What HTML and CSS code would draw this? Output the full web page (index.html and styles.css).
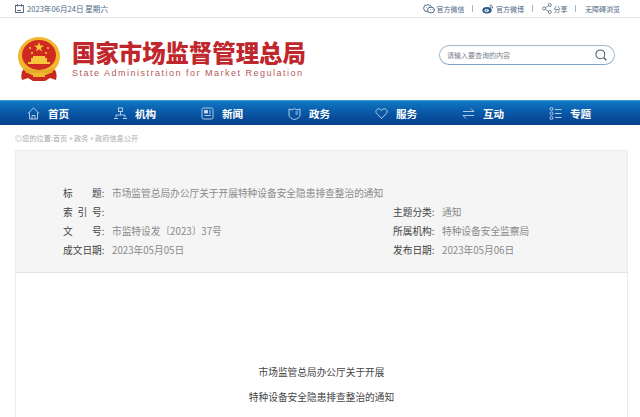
FILE: index.html
```html
<!DOCTYPE html>
<html lang="zh-CN">

<head>
    <meta charset="UTF-8">
    <meta name="viewport" content="width=device-width, initial-scale=1.0">
    <title>国家市场监督管理总局</title>
    <link rel="stylesheet" href="styles.css">
</head>

<body>
    <!-- Top bar -->
    <div class="topbar">
        <div class="date">
            <svg width="9" height="9" viewBox="0 0 9 9" fill="none" stroke="#4a5f78" stroke-width="0.9">
                <rect x="0.5" y="1.5" width="8" height="7"/>
                <path d="M2.500 0v2.500M6.500 0v2.500M2 6.500h4"/>
            </svg>
            <span>2023年06月24日 星期六</span>
        </div>
        <div class="toplinks">
            <a class="toplink">
                <svg width="12" height="10" viewBox="0 0 12 10" fill="none" stroke="#3f5a78" stroke-width="0.9">
                    <ellipse cx="4.600" cy="4.200" rx="4" ry="3.500"/>
                    <ellipse cx="8" cy="6" rx="3.400" ry="2.900" fill="#fff"/>
                    <path d="M3 3.400h.6M6 3.400h.6M7 5.500h.5M9 5.500h.5"/>
                </svg>
                官方微信
            </a>
            <i class="sep"></i>
            <a class="toplink">
                <svg width="12" height="10" viewBox="0 0 12 10" fill="none">
                    <ellipse cx="5" cy="6.300" rx="4.600" ry="3.300" fill="#2f5d8c"/>
                    <ellipse cx="4.700" cy="6.500" rx="2.200" ry="1.600" fill="#fff"/>
                    <circle cx="4.500" cy="6.600" r="0.800" fill="#2f5d8c"/>
                    <path d="M7.500 1.200c2-.5 3.600 1.200 3 3.200M7.800 2.800c1-.2 1.400.4 1.200 1.300" stroke="#2f5d8c" stroke-width="0.8"/>
                </svg>
                官方微博
            </a>
            <i class="sep"></i>
            <a class="toplink">
                <svg width="10" height="11" viewBox="0 0 10 11" fill="none" stroke="#566a80" stroke-width="0.8">
                    <circle cx="2" cy="5.500" r="1.500"/>
                    <circle cx="7.800" cy="2" r="1.500"/>
                    <circle cx="7.800" cy="9" r="1.500"/>
                    <path d="M3.300 4.700l3.200-2M3.300 6.300l3.200 2"/>
                </svg>
                分享
            </a>
            <i class="sep"></i>
            <a class="toplink">无障碍浏览</a>
        </div>
    </div>

    <!-- Logo and search -->
    <div class="header">
        <svg class="emblem" width="42" height="45" viewBox="0 0 42 45">
            <path d="M6 32c-3 2-3 8-2 11l6-2 5 3h12l5-3 6 2c1-3 1-9-2-11z" fill="#c8281e"/>
            <ellipse cx="21" cy="19.500" rx="21" ry="19.500" fill="#f0b72f"/>
            <ellipse cx="21" cy="18" rx="17" ry="15" fill="#cf2a1f"/>
            <path d="M21 5l1.200 3.600h3.800l-3.100 2.300 1.200 3.600-3.100-2.300-3.100 2.300 1.200-3.600-3.100-2.300h3.800z" fill="#f5c63a"/>
            <circle cx="12" cy="11" r="1.100" fill="#f5c63a"/>
            <circle cx="14" cy="16" r="1.100" fill="#f5c63a"/>
            <circle cx="30" cy="11" r="1.100" fill="#f5c63a"/>
            <circle cx="28" cy="16" r="1.100" fill="#f5c63a"/>
            <path d="M15 19h12v2H15zM13 21h16v4H13zM10 25h22v2H10z" fill="#f5c63a"/>
            <path d="M6 30c5 4 25 4 30 0l-2 6H8z" fill="#e9a92a"/>
            <rect x="15" y="36" width="12" height="4" fill="#f0b72f"/>
        </svg>
        <div class="brand">
            <div class="brand-cn">国家市场监督管理总局</div>
            <div class="brand-en">State Administration for Market Regulation</div>
        </div>
        <div class="search">
            <span class="search-text">请输入要查询的内容</span>
            <svg width="12" height="12" viewBox="0 0 13 13" fill="none" stroke="#4b5a68" stroke-width="1.100">
                <circle cx="5.800" cy="5.800" r="4.800"/>
                <path d="M9.300 9.300l3 3" stroke-width="1.500"/>
            </svg>
        </div>
    </div>

    <!-- Main nav -->
    <div class="nav">
        <a class="nav-item">
            <svg width="13" height="13" viewBox="0 0 13 13" fill="none" stroke="#c4d9ef" stroke-width="0.9">
                <path d="M0.800 6.500L6.500 1l5.700 5.500M2.500 5.500V12h8V5.500M5 12V8.500h3V12"/>
            </svg>
            首页
        </a>
        <a class="nav-item">
            <svg width="13" height="13" viewBox="0 0 13 13" fill="none" stroke="#c4d9ef" stroke-width="0.9">
                <rect x="4.500" y="1" width="4" height="3.500"/>
                <path d="M6.500 4.500V8M2 10.500V8h9v2.500M0 11.500h4M9 11.500h4"/>
            </svg>
            机构
        </a>
        <a class="nav-item">
            <svg width="13" height="13" viewBox="0 0 13 13" fill="none" stroke="#c4d9ef" stroke-width="0.9">
                <rect x="1" y="1" width="11" height="11" rx="1.500"/>
                <rect x="3.500" y="3.500" width="3" height="2.500" fill="#c4d9ef"/>
                <path d="M8 4h2M8 6h2M3.500 8.500h6.500"/>
            </svg>
            新闻
        </a>
        <a class="nav-item">
            <svg width="13" height="13" viewBox="0 0 13 13" fill="none" stroke="#c4d9ef" stroke-width="0.9">
                <path d="M1 2l3 1 2.500-1.500L9 3l3-1v6c0 2.500-3 4-5.500 4.500C4 12 1 10.500 1 8z"/>
                <path d="M7.500 5h2.500M7.500 7h2.500"/>
            </svg>
            政务
        </a>
        <a class="nav-item">
            <svg width="13" height="13" viewBox="0 0 13 13" fill="none" stroke="#c4d9ef" stroke-width="0.9">
                <path d="M6.500 11.500L1.500 6.200C0 4.300 1.500 1.800 3.600 1.800c1.300 0 2.300.8 2.900 1.700.6-.9 1.600-1.700 2.900-1.700 2.100 0 3.600 2.500 2.100 4.400z"/>
            </svg>
            服务
        </a>
        <a class="nav-item">
            <svg width="13" height="13" viewBox="0 0 13 13" fill="none" stroke="#c4d9ef" stroke-width="0.9">
                <path d="M1 4.500h11M9 1.500l3 3M12 8.500H1M4 11.500l-3-3"/>
            </svg>
            互动
        </a>
        <a class="nav-item">
            <svg width="13" height="13" viewBox="0 0 13 13" fill="none" stroke="#c4d9ef" stroke-width="0.9">
                <circle cx="2.500" cy="2" r="1.500"/>
                <circle cx="2.500" cy="6.500" r="1.500"/>
                <circle cx="2.500" cy="11" r="1.500"/>
                <path d="M6 2.500h6.500M6 6.500h6.500M6 10.500h6.500"/>
            </svg>
            专题
        </a>
    </div>

    <div class="crumb">◎您的位置:首页 » 政务 » 政府信息公开</div>

    <!-- Document meta -->
    <div class="meta">
        <div class="meta-row meta-full">
            <span class="label"><b>标题</b>:</span><span class="value">市场监管总局办公厅关于开展特种设备安全隐患排查整治的通知</span>
        </div>
        <div class="meta-row">
            <span class="label"><b>索引号</b>:</span><span class="value"></span>
        </div>
        <div class="meta-row">
            <span class="label"><b>主题分类</b>:</span><span class="value">通知</span>
        </div>
        <div class="meta-row">
            <span class="label"><b>文号</b>:</span><span class="value">市监特设发〔2023〕37号</span>
        </div>
        <div class="meta-row">
            <span class="label"><b>所属机构</b>:</span><span class="value">特种设备安全监察局</span>
        </div>
        <div class="meta-row">
            <span class="label"><b>成文日期</b>:</span><span class="value">2023年05月05日</span>
        </div>
        <div class="meta-row">
            <span class="label"><b>发布日期</b>:</span><span class="value">2023年05月06日</span>
        </div>
    </div>

    <div class="article">
        <p>市场监管总局办公厅关于开展</p>
        <p>特种设备安全隐患排查整治的通知</p>
    </div>
</body>

</html>
```

FILE: styles.css
```css
/* Page */
html,
body {
    height: 417px;
    overflow: hidden;
}

body {
    margin: 0;
    background: #fff;
    font-family: "Noto Sans CJK SC", "Noto Sans", sans-serif;
}

/* Top bar */
.topbar {
    height: 17px;
    border-bottom: 1px solid #e4e6e8;
    display: flex;
    align-items: center;
    justify-content: space-between;
    padding: 0 20px 0 15px;
    font-size: 7px;
    color: #4a6684;
}

.date {
    display: flex;
    align-items: center;
    gap: 3px;
    font-size: 7.6px;
}

.toplinks {
    display: flex;
    align-items: center;
}

.toplink {
    display: flex;
    align-items: center;
    gap: 2px;
}

.sep {
    width: 1px;
    height: 7px;
    background: #a9b4c0;
    margin: 0 9px 0 7.5px;
}

/* Logo and search */
.header {
    height: 82px;
    display: flex;
    align-items: center;
    padding: 0 25px 0 18px;
    box-sizing: border-box;
}

.emblem {
    margin-right: 12px;
}

.brand-cn {
    font-size: 23.4px;
    line-height: 26px;
    font-weight: 900;
    color: #c0272d;
}

.brand-en {
    margin-top: 2px;
    font-family: "Liberation Sans", sans-serif;
    font-size: 9px;
    line-height: 12px;
    letter-spacing: 1.5px;
    white-space: nowrap;
    color: #b5575a;
}

.search {
    margin-left: auto;
    margin-bottom: 8px;
    width: 176px;
    height: 20px;
    box-sizing: border-box;
    border: 1px solid #a3b8cd;
    border-bottom-color: #7ea3c6;
    border-radius: 10px;
    display: flex;
    align-items: center;
    justify-content: space-between;
    padding: 0 7px;
}

.search-text {
    font-size: 7px;
    color: #77808a;
}

/* Main nav */
.nav {
    height: 25px;
    display: flex;
    padding-left: 27px;
    background: linear-gradient(#0f78c4, #0a5aa8 45%, #063f8c);
    border-top: 1px solid #3f9ad8;
    box-sizing: border-box;
}

.nav-item {
    width: 87px;
    display: flex;
    align-items: center;
    gap: 8px;
    font-size: 10.6px;
    font-weight: 700;
    color: #fff;
}

.crumb {
    margin: 8px 0 0 15px;
    height: 17px;
    line-height: 10px;
    font-size: 7.2px;
    color: #a8a8a8;
}

/* Document meta */
.meta {
    width: 613px;
    height: 123px;
    margin-left: 15px;
    box-sizing: border-box;
    padding: 32px 0 0 47px;
    background: #f5f5f5;
    border: 1px solid #ececec;
    border-bottom-color: #e2e2e2;
    display: grid;
    grid-template-columns: 330px 1fr;
    grid-auto-rows: 19px;
    font-size: 9.7px;
}

.meta-full {
    grid-column: 1 / 3;
}

.meta-row {
    display: flex;
    align-items: center;
}

.label {
    width: 49px;
    flex: none;
    display: flex;
    color: #444;
}

.label b {
    width: 38.8px;
    font-weight: 400;
    text-align-last: justify;
}

.value {
    color: #8a8a8a;
}

/* Article */
.article {
    width: 613px;
    height: 144px;
    margin-left: 15px;
    box-sizing: border-box;
    padding-top: 87px;
    border-left: 1px solid #ececec;
    border-right: 1px solid #ececec;
    text-align: center;
    font-size: 9.7px;
    line-height: 25px;
    color: #444;
}

.article p {
    margin: 0;
}
```
